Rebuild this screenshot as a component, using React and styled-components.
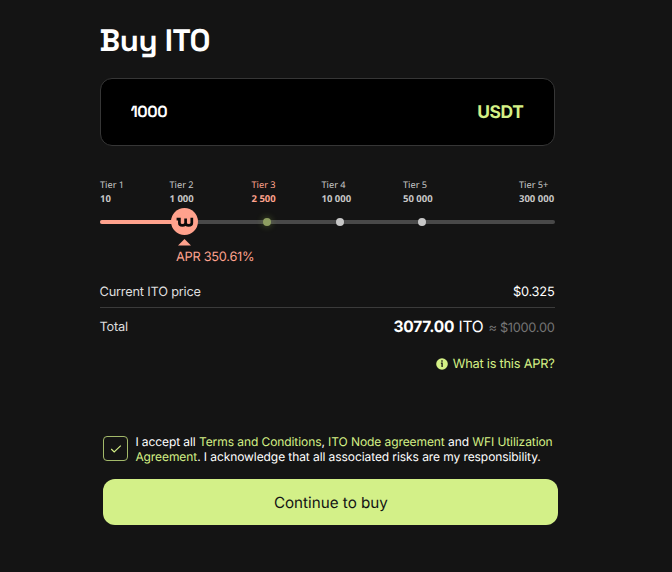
import React, {useState} from 'react';
import styled, {createGlobalStyle} from 'styled-components';

const GlobalStyle = createGlobalStyle`
  * {
    box-sizing: border-box;
  }

  body {
    margin: 0;
    background: #141414;
    color: #fff;
    font-family: Inter, sans-serif;
    text-rendering: geometricPrecision;
  }
`

const Page = styled.main`
  width: 672px;
  height: 572px;
  padding: 21px 0 0 99.5px;
  overflow: hidden;
`

const Panel = styled.section`
  width: 455px;
  display: flex;
  flex-direction: column;
`

const Title = styled.h1`
  margin: 0 0 16px;
  height: 41px;
  font-family: 'Space Grotesk', Inter, sans-serif;
  font-size: 31px;
  line-height: 41px;
  font-weight: 700;
  letter-spacing: -0.35px;
`

const AmountBox = styled.label`
  height: 68px;
  padding: 1px 30px 0;
  display: flex;
  align-items: center;
  justify-content: space-between;
  background: #000;
  border: 1px solid #363636;
  border-radius: 12px;
`

const AmountInput = styled.input`
  width: 200px;
  padding: 0 0 2px;
  border: none;
  outline: none;
  background: transparent;
  color: #fff;
  font-family: 'Space Grotesk', Inter, sans-serif;
  font-size: 16px;
  font-weight: 600;
  letter-spacing: -0.4px;
  text-rendering: inherit;
`

const Currency = styled.span`
  color: #d4f086;
  font-size: 17.4px;
  font-weight: 700;
  letter-spacing: -0.35px;
`

const Tiers = styled.div`
  margin-top: 32px;
  padding-left: 0.5px;
  display: grid;
  grid-template-columns: 69.5px 82px 70px 81.5px 116px 1fr;
  font-family: 'Noto Sans', sans-serif;
`

const Tier = styled.div`
  height: 28px;
  display: flex;
  flex-direction: column;
  white-space: nowrap;
  font-size: 9.2px;
  line-height: 14px;
  color: ${p => p.$active ? '#ffa28d' : '#c8c8c8'};
`

const TierAmount = styled.strong`
  font-size: 9.5px;
  font-weight: 700;
`

const Track = styled.div`
  position: relative;
  height: 4px;
  margin-top: 14px;
  border-radius: 2px;
  background: #494949;
`

const Progress = styled.div`
  width: 85px;
  height: 4px;
  border-radius: 2px;
  background: #ffa28d;
`

const Dot = styled.span`
  position: absolute;
  top: -2px;
  left: ${p => p.$left}px;
  width: 8px;
  height: 8px;
  border-radius: 50%;
  background: ${p => p.$glow ? '#8e9e61' : '#c7c7c7'};
  box-shadow: ${p => p.$glow ? '0 0 7px rgba(160, 190, 80, 0.45)' : 'none'};
`

const Thumb = styled.span`
  position: absolute;
  top: -12px;
  left: 71.5px;
  width: 27px;
  height: 27px;
  display: flex;
  align-items: center;
  justify-content: center;
  border-radius: 50%;
  background: #ffa28d;
`

const Apr = styled.div`
  width: 120px;
  margin: 15px 0 0 76.5px;
  display: flex;
  flex-direction: column;
  color: #ffa28d;
  font-size: 12.8px;
  line-height: 16px;
  letter-spacing: -0.28px;

  svg {
    margin: 0 0 4px 1.5px;
  }
`

const Details = styled.div`
  margin-top: 12px;
`

const Row = styled.div`
  height: ${p => p.$height}px;
  display: flex;
  align-items: center;
  justify-content: space-between;
  font-size: 12.8px;
  letter-spacing: -0.2px;
  color: #dedede;
  border-bottom: ${p => p.$line ? '1px solid #3b3b3b' : 'none'};
`

const Price = styled.span`
  color: #fff;
`

const Total = styled.span`
  padding-bottom: 2px;
  display: flex;
  align-items: baseline;
  gap: 5px;
  color: #fff;
  font-size: 15.5px;
`

const TotalValue = styled.strong`
  font-weight: 700;
`

const Approx = styled.span`
  font-size: 12.8px;
  letter-spacing: -0.28px;
  color: #757575;
`

const HelpButton = styled.button`
  align-self: flex-end;
  height: 18px;
  margin-top: 8px;
  padding: 0;
  display: flex;
  align-items: center;
  gap: 5px;
  border: none;
  background: none;
  color: #d4f086;
  font-family: inherit;
  font-size: 12.8px;
  letter-spacing: -0.23px;
  text-rendering: inherit;
`

const Agreement = styled.div`
  margin: 61px 0 0 3.9px;
  width: 455px;
  display: flex;
  gap: 7px;
`

const Checkbox = styled.button`
  flex: none;
  width: 25px;
  height: 25px;
  margin-top: 2px;
  padding: 0;
  display: flex;
  align-items: center;
  justify-content: center;
  border: 1px solid #a3b96a;
  border-radius: 4px;
  background: transparent;
`

const AgreementText = styled.p`
  margin: 0;
  font-size: 12px;
  line-height: 15px;
  letter-spacing: -0.08px;
  white-space: nowrap;
`

const Link = styled.a`
  color: #d4f086;
`

const Submit = styled.button`
  width: 455px;
  height: 46px;
  margin: 15px 0 0 3.9px;
  border: none;
  border-radius: 12px;
  background: #d3f088;
  color: #141414;
  font-family: inherit;
  font-size: 15.2px;
  text-rendering: inherit;
`

const tiers = [
    {name: 'Tier 1', amount: '10'},
    {name: 'Tier 2', amount: '1 000'},
    {name: 'Tier 3', amount: '2 500', active: true},
    {name: 'Tier 4', amount: '10 000'},
    {name: 'Tier 5', amount: '50 000'},
    {name: 'Tier 5+', amount: '300 000'},
]

function App() {

    const [amount, setAmount] = useState('1000')
    const [accepted, setAccepted] = useState(true)

    return (
        <Page>
            <GlobalStyle/>
            <Panel>
                <Title>Buy ITO</Title>
                <AmountBox>
                    <AmountInput value={amount} onChange={(e) => setAmount(e.target.value)}/>
                    <Currency>USDT</Currency>
                </AmountBox>

                <Tiers>
                    {tiers.map(tier => (
                        <Tier key={tier.name} $active={tier.active}>
                            <span>{tier.name}</span>
                            <TierAmount>{tier.amount}</TierAmount>
                        </Tier>
                    ))}
                </Tiers>
                <Track>
                    <Progress/>
                    <Dot $left={163.5} $glow/>
                    <Dot $left={236}/>
                    <Dot $left={318}/>
                    <Thumb>
                        <svg width="18" height="12" viewBox="0 0 18 12" fill="none" stroke="#0b0b0b" strokeWidth="2.7">
                            <path d="M0.6 3.1H3.4V7Q3.4 9.4 6.3 9.4Q9.6 9.4 9.6 7V2.4M9.6 7Q9.6 9.4 12.6 9.4Q15.8 9.4 15.8 7V1.8"/>
                        </svg>
                    </Thumb>
                </Track>
                <Apr>
                    <svg width="13" height="7" viewBox="0 0 13 7"><path d="M6.5 0L13 6.5H0Z" fill="#ffa28d"/></svg>
                    <span>APR 350.61%</span>
                </Apr>

                <Details>
                    <Row $height={30} $line>
                        <span>Current ITO price</span>
                        <Price>$0.325</Price>
                    </Row>
                    <Row $height={39}>
                        <span>Total</span>
                        <Total>
                            <span><TotalValue>3077.00</TotalValue> ITO</span>
                            <Approx>≈ $1000.00</Approx>
                        </Total>
                    </Row>
                </Details>
                <HelpButton>
                    <svg width="12" height="12" viewBox="0 0 12 12">
                        <circle cx="6" cy="6" r="5.8" fill="#d4f086"/>
                        <path d="M4.9 5.1H6.1V9M5.3 3H6.7" stroke="#141414" strokeWidth="1.3" fill="none"/>
                    </svg>
                    What is this APR?
                </HelpButton>

                <Agreement>
                    <Checkbox onClick={() => setAccepted(!accepted)}>
                        {accepted && (
                            <svg width="12" height="10" viewBox="0 0 12 10" fill="none" stroke="#d4f086" strokeWidth="1.1">
                                <path d="M1.2 5L4.2 8L10.8 1.6"/>
                            </svg>
                        )}
                    </Checkbox>
                    <AgreementText>
                        I accept all <Link>Terms and Conditions</Link>, <Link>ITO Node agreement</Link> and <Link>WFI Utilization<br/>
                        Agreement</Link>. I acknowledge that all associated risks are my responsibility.
                    </AgreementText>
                </Agreement>
                <Submit>Continue to buy</Submit>
            </Panel>
        </Page>
    );
}

export default App;
